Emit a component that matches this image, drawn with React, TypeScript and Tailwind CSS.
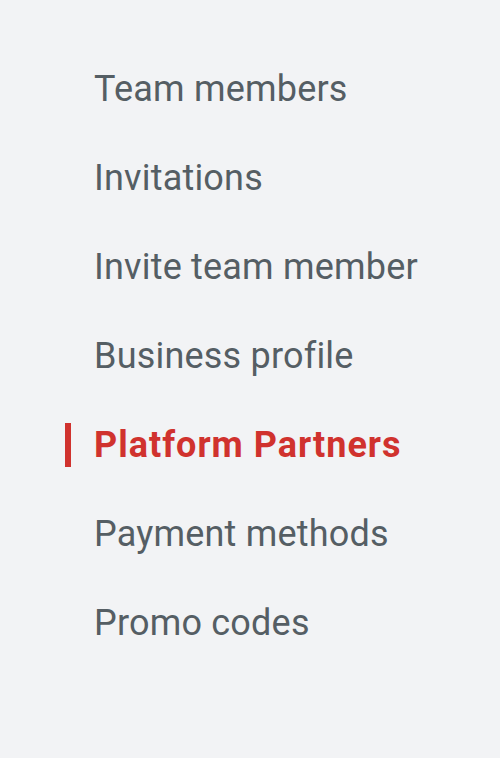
const items = [
  'Team members',
  'Invitations',
  'Invite team member',
  'Business profile',
  'Platform Partners',
  'Payment methods',
  'Promo codes',
];

export default function App() {
  const active = 'Platform Partners';
  return (
    <div className="min-h-[758px] w-[500px] bg-[#f2f3f5] pt-[44px] font-['Roboto',sans-serif]">
      <nav className="flex flex-col">
        {items.map((item) => (
          <div key={item} className="flex h-[89px] items-center">
            <div
              className={`ml-[65px] h-[44px] w-[6px] ${item === active ? 'bg-[#d0322e]' : 'bg-transparent'}`}
            />
            <span
              className={`ml-[23px] text-[36px] leading-none ${
                item === active ? 'font-bold tracking-[1px] text-[#d0322e]' : 'tracking-[0.2px] text-[#555e64]'
              }`}
            >
              {item}
            </span>
          </div>
        ))}
      </nav>
    </div>
  );
}
